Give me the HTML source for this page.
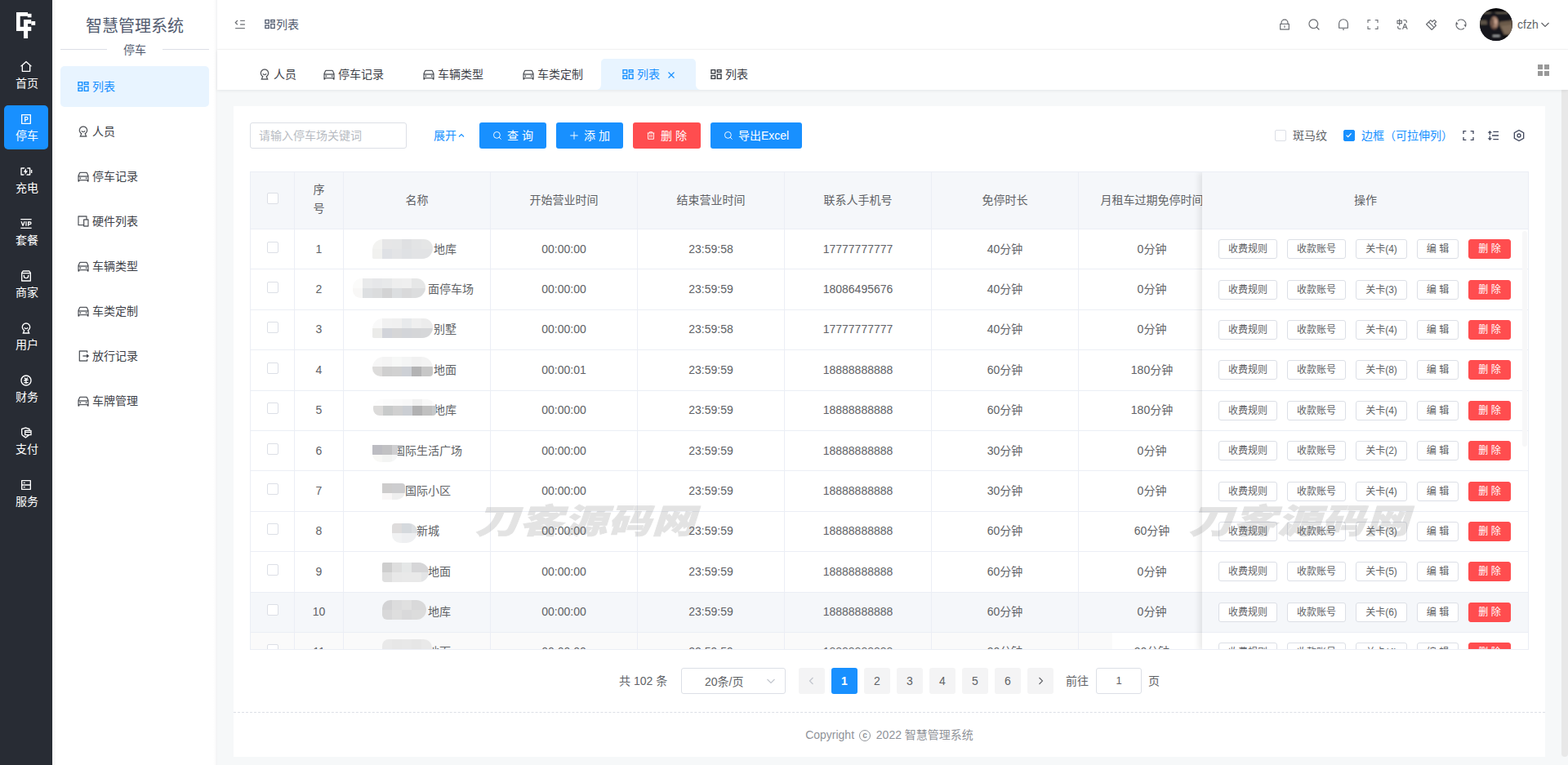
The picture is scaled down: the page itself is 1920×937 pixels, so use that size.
<!DOCTYPE html>
<html lang="zh-CN">
<head>
<meta charset="utf-8">
<title>智慧管理系统</title>
<style>
*{box-sizing:border-box;margin:0;padding:0}
html,body{width:1920px;height:937px;overflow:hidden;background:#f6f8f9;font-family:"Liberation Sans","Noto Sans CJK SC",sans-serif;font-size:14px;color:#606266}
svg{display:block}
i,b{font-style:normal;font-weight:normal}
.abs{position:absolute}
#col1{position:absolute;left:0;top:0;width:64px;height:937px;background:#282c34}
.c1{position:absolute;left:5px;width:54px;height:54px;border-radius:5px;color:#fff;text-align:center}
.c1.on{background:#1890ff}
.c1 svg{position:absolute;left:19px;top:9px;width:16px;height:16px}
.c1 span{position:absolute;left:1px;width:54px;top:27px;font-size:14px;line-height:20px;color:#fff}
#col2{position:absolute;left:64px;top:0;width:202px;height:937px;background:#fff}
#title{position:absolute;left:0;top:16px;width:202px;text-align:center;font-size:20px;line-height:32px;color:#515a6e}
#divl{position:absolute;left:10px;top:60px;width:182px;height:1px;background:#dcdfe6}
#divt{position:absolute;left:67px;top:50px;width:68px;background:#fff;text-align:center;font-size:14px;line-height:22px;color:#515a6e}
.m{position:absolute;left:10px;width:182px;height:50px;border-radius:5px;color:#3d4047;font-size:14px;line-height:50px;white-space:nowrap}
.m.on{background:#e8f4ff;color:#1890ff}
.m svg{position:absolute;left:20px;top:17px;width:16px;height:16px}
.m span{position:absolute;left:39px;top:0}
#hdr{position:absolute;left:266px;top:0;width:1654px;height:60px;background:#fff}
#hline{position:absolute;left:266px;top:60px;width:1654px;height:1px;background:#f5f5f6}
#tabs{position:absolute;left:266px;top:61px;width:1654px;height:49px;background:#fff;box-shadow:0 1px 4px rgba(0,21,41,.08)}
.hi{position:absolute;top:22px;width:16px;height:16px;color:#5a5d63;stroke:#fff;stroke-width:.45}
.tab{position:absolute;top:18px;height:24px;line-height:24px;font-size:14px;color:#3d4047;white-space:nowrap}
.tab svg{position:absolute;left:0;top:4px;width:16px;height:16px}
.tab span{position:absolute;left:19px;top:0}
#card{position:absolute;left:286px;top:130px;width:1606px;height:797px;background:#fff}
.btn{position:absolute;top:150px;height:32px;border-radius:3px;color:#fff;font-size:14px;line-height:32px;white-space:nowrap}
.btn svg{position:absolute;top:10px;width:12px;height:12px}
.blue{background:#1890ff}
.red{background:#ff4d4f}
.cb{display:block;width:14px;height:14px;border:1px solid #dcdfe6;border-radius:2px;background:#fff}
.cb.on{background:#1890ff;border-color:#1890ff}
#tbl{position:absolute;left:306px;top:210px;width:1566px;height:586px;border:1px solid #ebeef5;overflow:hidden;background:#fff}
#tbl .tr{position:absolute;left:0;width:1566px;border-bottom:1px solid #ebeef5;background:#fff}
#tbl .tr.th{background:#f5f7fa;color:#606266}
#tbl .tr.hov{background:#f5f7fa}
#tbl .tr.last{background:linear-gradient(90deg,#fafafa 1055px,#fff 1055px)}
#tbl .td{position:absolute;top:0;height:100%;border-right:1px solid #ebeef5;text-align:center;line-height:49px;font-size:14px;color:#606266;white-space:nowrap;overflow:hidden}
#tbl .tr:not(.th) .td{line-height:23px;padding-top:12.550px}
#tbl .tr:not(.th) .td span.abs{top:12.550px}
.blur{position:absolute;display:block;filter:blur(.4px)}
#fix{position:absolute;left:1165px;top:0;width:400px;height:586px;background:#fff;box-shadow:-3px 0 8px rgba(0,0,0,.1)}
#fix .fh{position:absolute;left:0;top:0;width:400px;background:#f5f7fa;text-align:center;font-size:14px;color:#606266;border-bottom:1px solid #ebeef5}
#fix .fr{position:absolute;left:0;width:400px;border-bottom:1px solid #ebeef5;background:#fff}
#fix .fr.hov{background:#f5f7fa}
.ob{position:absolute;top:12.300px;height:24px;border:1px solid #dcdfe6;border-radius:3px;background:#fff;font-size:12px;line-height:22px;text-align:center;color:#606266;white-space:nowrap}
.ob.del{background:#ff4d4f;border-color:#ff4d4f;color:#fff}
.wm{position:absolute;top:606px;font-size:53px;line-height:66px;font-weight:900;font-style:italic;color:#777;-webkit-text-stroke:1px #777;opacity:.2;white-space:nowrap;letter-spacing:1px;transform:scaleY(.78)}
.pg{position:absolute;top:818px;width:32px;height:32px;border-radius:3px;background:#f4f4f5;color:#606266;font-size:14px;line-height:32px;text-align:center}
.pg.on{background:#1890ff;color:#fff;font-weight:bold}
.pg svg{position:absolute;left:10px;top:10px;width:12px;height:12px}
#edge{position:absolute;left:261px;top:0;width:5px;height:937px;background:linear-gradient(90deg,rgba(0,21,41,0),rgba(0,21,41,.015) 50%,rgba(0,21,41,.055))}
#tbl .tr.last .td{padding-top:11.550px}
#tbl .tr.last .td span.abs{top:11.550px}
#tbl .tr.last .cb{margin-top:-1px}
.m svg path,.tab svg path{stroke:#fff;stroke-width:.35}
.m.on svg path{stroke:#e8f4ff}
#col2:before{content:"";position:absolute;left:0;top:0;width:5px;height:937px;background:linear-gradient(90deg,rgba(0,0,0,.05),rgba(0,0,0,0))}
</style>
</head>
<body>
<div id="card"></div>
<div class="abs" style="left:306px;top:150px;width:192px;height:32px;border:1px solid #dcdfe6;border-radius:3px;background:#fff;padding-left:10px;line-height:30px;font-size:14px;color:#b7bbc2">请输入停车场关键词</div>
<div class="abs" style="left:531px;top:150px;line-height:32px;font-size:14px;color:#1890ff">展开</div>
<svg class="abs" style="left:560px;top:161px;width:10px;height:10px" viewBox="0 0 10 10" fill="none" stroke="#1890ff" stroke-width="1.1"><path d="M2 6.500L5 3.500L8 6.500"/></svg>
<div class="btn blue" style="left:587px;width:82px"><svg viewBox="0 0 14 14" fill="none" stroke="currentColor" stroke-width="1.1" style="left:16px"><circle cx="6.3" cy="6.3" r="4.6"/><path d="M9.700 9.700L12 12" stroke-linecap="round"/></svg><span class="abs" style="left:34px">查 询</span></div>
<div class="btn blue" style="left:681px;width:82px"><svg viewBox="0 0 14 14" fill="none" stroke="currentColor" stroke-width="1.1" style="left:16px"><path d="M7 1.500v11M1.500 7h11"/></svg><span class="abs" style="left:34px">添 加</span></div>
<div class="btn red" style="left:775px;width:83px"><svg viewBox="0 0 14 14" fill="none" stroke="currentColor" stroke-width="1.1" style="left:16px"><path d="M2 3.500h10M5 3.500v-1.500h4v1.500M3 3.500v8.500h8v-8.500M5.700 5.700v4M8.300 5.700v4"/></svg><span class="abs" style="left:34px">删 除</span></div>
<div class="btn blue" style="left:870px;width:112px"><svg viewBox="0 0 14 14" fill="none" stroke="currentColor" stroke-width="1.1" style="left:16px"><circle cx="6.3" cy="6.3" r="4.6"/><path d="M9.700 9.700L12 12" stroke-linecap="round"/></svg><span class="abs" style="left:34px">导出Excel</span></div>
<div class="abs cb" style="left:1561px;top:159px"></div><div class="abs" style="left:1583px;top:155px;line-height:22px;font-size:14px;color:#606266">斑马纹</div>
<div class="abs cb on" style="left:1645px;top:159px"><svg viewBox="0 0 14 14" fill="none" stroke="#fff" stroke-width="1.4" style="width:12px;height:12px;margin:0"><path d="M3 6.500L5.500 9L10 4"/></svg></div><div class="abs" style="left:1667px;top:155px;line-height:22px;font-size:14px;color:#1890ff;white-space:nowrap">边框（可拉伸列）</div>
<svg viewBox="0 0 24 24" fill="currentColor" style="position:absolute;left:1790px;top:158px;width:16px;height:16px;color:#434a5f"><path d="M20 3h2v6h-2V5h-4V3h4zM4 3h4v2H4v4H2V3h2zm16 16v-4h2v6h-6v-2h4zM4 19h4v2H2v-6h2v4z"/></svg>
<svg class="abs" style="left:1821px;top:158px;width:16px;height:16px;color:#434a5f" viewBox="0 0 24 24" fill="currentColor"><path d="M11 4h10v2H11V4zM6 7v4H4V7H1l4-4 4 4H6zm0 10h3l-4 4-4-4h3v-4h2v4zm5 1h10v2H11v-2zm-2-7h12v2H9v-2z"/></svg>
<svg class="abs" style="left:1852px;top:158px;width:16px;height:16px;color:#434a5f" viewBox="0 0 24 24" fill="currentColor"><path d="M12 1l9.500 5.500v11L12 23l-9.500-5.500v-11L12 1zm0 2.311L4.500 7.653v8.694l7.500 4.342 7.500-4.342V7.653L12 3.311zM12 16a4 4 0 1 1 0-8 4 4 0 0 1 0 8zm0-2a2 2 0 1 0 0-4 2 2 0 0 0 0 4z"/></svg>
<div id="tbl">
<div class="tr th" style="top:0;height:70px">
<div class="td" style="left:0px;width:54px"><i class="cb" style="position:absolute;left:20px;top:25px"></i></div>
<div class="td" style="left:54px;width:60px;line-height:23px;padding-top:10px">序<br>号</div>
<div class="td" style="left:114px;width:180px;line-height:68px">名称</div>
<div class="td" style="left:294px;width:180px;line-height:68px">开始营业时间</div>
<div class="td" style="left:474px;width:180px;line-height:68px">结束营业时间</div>
<div class="td" style="left:654px;width:180px;line-height:68px">联系人手机号</div>
<div class="td" style="left:834px;width:180px;line-height:68px">免停时长</div>
<div class="td" style="left:1014px;width:180px;line-height:68px">月租车过期免停时间</div>
</div>
<div class="tr" style="top:70.0px;height:49.4px">
<div class="td" style="left:0;width:54px"><i class="cb" style="position:absolute;left:20px;top:14.550px"></i></div>
<div class="td" style="left:54px;width:60px">1</div>
<div class="td" style="left:114px;width:180px"><span class="abs" style="left:110px;white-space:nowrap">地库</span><b class="blur" style="left:35px;top:12px;width:74px;height:24px;border-radius:14px 12px 14px 2px;background:linear-gradient(90deg,#f3f3f1 0px 12px,#e6e6e7 12px 24px,#e5e6e7 24px 36px,#dfe0e2 36px 48px,#e3e4e5 48px 60px,#e5e6e6 60px 72px,#e5e6e6 72px 74px),linear-gradient(90deg,#f1f1ef 0px 12px,#dfe1e5 12px 24px,#e3e4e6 24px 36px,#dfe1e4 36px 48px,#e2e3e5 48px 60px,#e2e3e5 60px 72px,#e2e3e5 72px 74px);background-position:0 0px,0 12px;background-size:100% 12px,100% 12px;background-repeat:no-repeat"></b></div>
<div class="td" style="left:294px;width:180px">00:00:00</div>
<div class="td" style="left:474px;width:180px">23:59:58</div>
<div class="td" style="left:654px;width:180px">17777777777</div>
<div class="td" style="left:834px;width:180px">40分钟</div>
<div class="td" style="left:1014px;width:180px">0分钟</div>
</div>
<div class="tr" style="top:119.4px;height:49.4px">
<div class="td" style="left:0;width:54px"><i class="cb" style="position:absolute;left:20px;top:14.550px"></i></div>
<div class="td" style="left:54px;width:60px">2</div>
<div class="td" style="left:114px;width:180px"><span class="abs" style="left:103px;white-space:nowrap">面停车场</span><b class="blur" style="left:11px;top:11px;width:89px;height:24px;border-radius:12px 12px 14px 10px;background:linear-gradient(90deg,#fbfbfa 0px 12px,#e9eaeb 12px 24px,#e6e7e9 24px 36px,#e8e9ea 36px 48px,#eeeeee 48px 60px,#efefef 60px 72px,#e6e7e7 72px 84px,#e6e7e7 84px 89px),linear-gradient(90deg,#f8f7f6 0px 12px,#dddfe1 12px 24px,#dbdcdd 24px 36px,#d3d3d4 36px 48px,#dcdee0 48px 60px,#d9d9da 60px 72px,#dcddde 72px 84px,#dcddde 84px 89px);background-position:0 0px,0 12px;background-size:100% 12px,100% 12px;background-repeat:no-repeat"></b></div>
<div class="td" style="left:294px;width:180px">00:00:00</div>
<div class="td" style="left:474px;width:180px">23:59:59</div>
<div class="td" style="left:654px;width:180px">18086495676</div>
<div class="td" style="left:834px;width:180px">40分钟</div>
<div class="td" style="left:1014px;width:180px">0分钟</div>
</div>
<div class="tr" style="top:168.8px;height:49.4px">
<div class="td" style="left:0;width:54px"><i class="cb" style="position:absolute;left:20px;top:14.550px"></i></div>
<div class="td" style="left:54px;width:60px">3</div>
<div class="td" style="left:114px;width:180px"><span class="abs" style="left:110px;white-space:nowrap">别墅</span><b class="blur" style="left:35px;top:10px;width:74px;height:24px;border-radius:14px 12px 14px 2px;background:linear-gradient(90deg,#f9f9f9 0px 12px,#f1f1f1 12px 24px,#f0f0f0 24px 36px,#e8eaec 36px 48px,#efefef 48px 60px,#ececec 60px 72px,#ececec 72px 74px),linear-gradient(90deg,#ebebe9 0px 12px,#d2d4da 12px 24px,#d6d6d7 24px 36px,#d3d5d9 36px 48px,#d5d6d8 48px 60px,#d6d7d9 60px 72px,#d6d7d9 72px 74px);background-position:0 0px,0 12px;background-size:100% 12px,100% 12px;background-repeat:no-repeat"></b></div>
<div class="td" style="left:294px;width:180px">00:00:00</div>
<div class="td" style="left:474px;width:180px">23:59:58</div>
<div class="td" style="left:654px;width:180px">17777777777</div>
<div class="td" style="left:834px;width:180px">40分钟</div>
<div class="td" style="left:1014px;width:180px">0分钟</div>
</div>
<div class="tr" style="top:218.2px;height:49.4px">
<div class="td" style="left:0;width:54px"><i class="cb" style="position:absolute;left:20px;top:14.550px"></i></div>
<div class="td" style="left:54px;width:60px">4</div>
<div class="td" style="left:114px;width:180px"><span class="abs" style="left:110px;white-space:nowrap">地面</span><b class="blur" style="left:35px;top:8px;width:74px;height:24px;border-radius:14px 14px 4px 10px;background:linear-gradient(90deg,#f6f6f6 0px 12px,#f4f4f4 12px 24px,#f7f8f7 24px 36px,#f4f5f5 36px 48px,#f1f1f1 48px 60px,#f3f3f3 60px 72px,#f3f3f3 72px 74px),linear-gradient(90deg,#dddcdb 0px 12px,#cfcfcf 12px 24px,#d1d1d1 24px 36px,#cdd0d5 36px 48px,#b3b3b4 48px 60px,#c7c7c7 60px 72px,#c7c7c7 72px 74px);background-position:0 0px,0 12px;background-size:100% 12px,100% 12px;background-repeat:no-repeat"></b></div>
<div class="td" style="left:294px;width:180px">00:00:01</div>
<div class="td" style="left:474px;width:180px">23:59:59</div>
<div class="td" style="left:654px;width:180px">18888888888</div>
<div class="td" style="left:834px;width:180px">60分钟</div>
<div class="td" style="left:1014px;width:180px">180分钟</div>
</div>
<div class="tr" style="top:267.6px;height:49.4px">
<div class="td" style="left:0;width:54px"><i class="cb" style="position:absolute;left:20px;top:14.550px"></i></div>
<div class="td" style="left:54px;width:60px">5</div>
<div class="td" style="left:114px;width:180px"><span class="abs" style="left:110px;white-space:nowrap">地库</span><b class="blur" style="left:36px;top:10px;width:77px;height:20px;border-radius:10px 12px 4px 8px;background:linear-gradient(90deg,#fdfdfd 0px 12px,#fbfbfb 12px 24px,#fafafa 24px 36px,#f8f8f8 36px 48px,#f1f1f1 48px 60px,#f8f8f8 60px 72px,#fbfbfb 72px 77px),linear-gradient(90deg,#dcdbda 0px 12px,#c8caca 12px 24px,#d0d0d0 24px 36px,#cbced3 36px 48px,#b1b1b2 48px 60px,#c0c0c0 60px 72px,#c6c8c9 72px 77px);background-position:0 0px,0 8px;background-size:100% 8px,100% 12px;background-repeat:no-repeat"></b></div>
<div class="td" style="left:294px;width:180px">00:00:00</div>
<div class="td" style="left:474px;width:180px">23:59:59</div>
<div class="td" style="left:654px;width:180px">18888888888</div>
<div class="td" style="left:834px;width:180px">60分钟</div>
<div class="td" style="left:1014px;width:180px">180分钟</div>
</div>
<div class="tr" style="top:317.0px;height:49.4px">
<div class="td" style="left:0;width:54px"><i class="cb" style="position:absolute;left:20px;top:14.550px"></i></div>
<div class="td" style="left:54px;width:60px">6</div>
<div class="td" style="left:114px;width:180px"><span class="abs" style="left:61px;white-space:nowrap">国际生活广场</span><b class="blur" style="left:35px;top:17px;width:31px;height:21px;border-radius:0 0 10px 10px;background:linear-gradient(90deg,#bcbcc2 0px 12px,#c1c1c3 12px 24px,#cfcfd1 24px 31px),linear-gradient(90deg,#f8f8f6 0px 12px,#f3f4f3 12px 24px,#f6f7f7 24px 31px);background-position:0 0px,0 12px;background-size:100% 12px,100% 9px;background-repeat:no-repeat"></b></div>
<div class="td" style="left:294px;width:180px">00:00:00</div>
<div class="td" style="left:474px;width:180px">23:59:59</div>
<div class="td" style="left:654px;width:180px">18888888888</div>
<div class="td" style="left:834px;width:180px">30分钟</div>
<div class="td" style="left:1014px;width:180px">0分钟</div>
</div>
<div class="tr" style="top:366.4px;height:49.4px">
<div class="td" style="left:0;width:54px"><i class="cb" style="position:absolute;left:20px;top:14.550px"></i></div>
<div class="td" style="left:54px;width:60px">7</div>
<div class="td" style="left:114px;width:180px"><span class="abs" style="left:75px;white-space:nowrap">国际小区</span><b class="blur" style="left:47px;top:15px;width:28px;height:20px;border-radius:0 4px 10px 0;background:linear-gradient(90deg,#cdcccc 0px 12px,#cdcdcf 12px 24px,#cdcdcf 24px 28px),linear-gradient(90deg,#f9f7f7 0px 12px,#efefef 12px 24px,#efefef 24px 28px);background-position:0 0px,0 12px;background-size:100% 12px,100% 8px;background-repeat:no-repeat"></b></div>
<div class="td" style="left:294px;width:180px">00:00:00</div>
<div class="td" style="left:474px;width:180px">23:59:59</div>
<div class="td" style="left:654px;width:180px">18888888888</div>
<div class="td" style="left:834px;width:180px">30分钟</div>
<div class="td" style="left:1014px;width:180px">0分钟</div>
</div>
<div class="tr" style="top:415.8px;height:49.4px">
<div class="td" style="left:0;width:54px"><i class="cb" style="position:absolute;left:20px;top:14.550px"></i></div>
<div class="td" style="left:54px;width:60px">8</div>
<div class="td" style="left:114px;width:180px"><span class="abs" style="left:89px;white-space:nowrap">新城</span><b class="blur" style="left:59px;top:14px;width:31px;height:24px;border-radius:4px 10px 14px 10px;background:linear-gradient(90deg,#dedcdc 0px 12px,#d5d9dd 12px 24px,#dcdfe2 24px 31px),linear-gradient(90deg,#f1f2f3 0px 12px,#eeeff1 12px 24px,#eeeff1 24px 31px);background-position:0 0px,0 12px;background-size:100% 12px,100% 12px;background-repeat:no-repeat"></b></div>
<div class="td" style="left:294px;width:180px">00:00:00</div>
<div class="td" style="left:474px;width:180px">23:59:59</div>
<div class="td" style="left:654px;width:180px">18888888888</div>
<div class="td" style="left:834px;width:180px">60分钟</div>
<div class="td" style="left:1014px;width:180px">60分钟</div>
</div>
<div class="tr" style="top:465.2px;height:49.4px">
<div class="td" style="left:0;width:54px"><i class="cb" style="position:absolute;left:20px;top:14.550px"></i></div>
<div class="td" style="left:54px;width:60px">9</div>
<div class="td" style="left:114px;width:180px"><span class="abs" style="left:103px;white-space:nowrap">地面</span><b class="blur" style="left:47px;top:13px;width:57px;height:24px;border-radius:2px 14px 14px 4px;background:linear-gradient(90deg,#cecece 0px 12px,#dedede 12px 24px,#e5e7e7 24px 36px,#d6d6d8 36px 48px,#d6d6d8 48px 57px),linear-gradient(90deg,#dfdfdf 0px 12px,#e8e8e8 12px 24px,#e9e9e9 24px 36px,#e9e9e9 36px 48px,#e3e4e6 48px 57px);background-position:0 0px,0 12px;background-size:100% 12px,100% 12px;background-repeat:no-repeat"></b></div>
<div class="td" style="left:294px;width:180px">00:00:00</div>
<div class="td" style="left:474px;width:180px">23:59:59</div>
<div class="td" style="left:654px;width:180px">18888888888</div>
<div class="td" style="left:834px;width:180px">60分钟</div>
<div class="td" style="left:1014px;width:180px">0分钟</div>
</div>
<div class="tr hov" style="top:514.6px;height:49.4px">
<div class="td" style="left:0;width:54px"><i class="cb" style="position:absolute;left:20px;top:14.550px"></i></div>
<div class="td" style="left:54px;width:60px">10</div>
<div class="td" style="left:114px;width:180px"><span class="abs" style="left:103px;white-space:nowrap">地库</span><b class="blur" style="left:47px;top:9px;width:54px;height:24px;border-radius:10px 12px 12px 6px;background:linear-gradient(90deg,#d3d3d5 0px 12px,#dcdcdd 12px 24px,#e0e0e0 24px 36px,#d9d9da 36px 48px,#d9d9da 48px 54px),linear-gradient(90deg,#d8d8d9 0px 12px,#dedede 12px 24px,#d9d9da 24px 36px,#dcdcdc 36px 48px,#dcdcdc 48px 54px);background-position:0 0px,0 12px;background-size:100% 12px,100% 12px;background-repeat:no-repeat"></b></div>
<div class="td" style="left:294px;width:180px">00:00:00</div>
<div class="td" style="left:474px;width:180px">23:59:59</div>
<div class="td" style="left:654px;width:180px">18888888888</div>
<div class="td" style="left:834px;width:180px">60分钟</div>
<div class="td" style="left:1014px;width:180px">0分钟</div>
</div>
<div class="tr last" style="top:564.0px;height:49.4px">
<div class="td" style="left:0;width:54px"><i class="cb" style="position:absolute;left:20px;top:14.550px"></i></div>
<div class="td" style="left:54px;width:60px">11</div>
<div class="td" style="left:114px;width:180px"><span class="abs" style="left:103px;white-space:nowrap">地面</span><b class="blur" style="left:47px;top:8px;width:61px;height:12px;border-radius:8px 10px 0 0;background:linear-gradient(90deg,#e9e9e9 0px 12px,#e7e7e7 12px 24px,#e8e8e8 24px 36px,#e6e6e6 36px 48px,#e9e9e9 48px 60px,#e9e9e9 60px 61px);background-position:0 0px;background-size:100% 12px;background-repeat:no-repeat"></b></div>
<div class="td" style="left:294px;width:180px">00:00:00</div>
<div class="td" style="left:474px;width:180px">23:59:59</div>
<div class="td" style="left:654px;width:180px">18888888888</div>
<div class="td" style="left:834px;width:180px">30分钟</div>
<div class="td" style="left:1014px;width:180px">30分钟</div>
</div>
<div id="fix"><div class="fh" style="height:70px;line-height:68px">操作</div>
<div class="fr" style="top:70.0px;height:49.4px"><span class="ob" style="left:20px;width:72px">收费规则</span><span class="ob" style="left:104px;width:72px">收款账号</span><span class="ob" style="left:188px;width:63px">关卡(4)</span><span class="ob" style="left:263px;width:51px">编 辑</span><span class="ob del" style="left:326px;width:52px">删 除</span></div>
<div class="fr" style="top:119.4px;height:49.4px"><span class="ob" style="left:20px;width:72px">收费规则</span><span class="ob" style="left:104px;width:72px">收款账号</span><span class="ob" style="left:188px;width:63px">关卡(3)</span><span class="ob" style="left:263px;width:51px">编 辑</span><span class="ob del" style="left:326px;width:52px">删 除</span></div>
<div class="fr" style="top:168.8px;height:49.4px"><span class="ob" style="left:20px;width:72px">收费规则</span><span class="ob" style="left:104px;width:72px">收款账号</span><span class="ob" style="left:188px;width:63px">关卡(4)</span><span class="ob" style="left:263px;width:51px">编 辑</span><span class="ob del" style="left:326px;width:52px">删 除</span></div>
<div class="fr" style="top:218.2px;height:49.4px"><span class="ob" style="left:20px;width:72px">收费规则</span><span class="ob" style="left:104px;width:72px">收款账号</span><span class="ob" style="left:188px;width:63px">关卡(8)</span><span class="ob" style="left:263px;width:51px">编 辑</span><span class="ob del" style="left:326px;width:52px">删 除</span></div>
<div class="fr" style="top:267.6px;height:49.4px"><span class="ob" style="left:20px;width:72px">收费规则</span><span class="ob" style="left:104px;width:72px">收款账号</span><span class="ob" style="left:188px;width:63px">关卡(4)</span><span class="ob" style="left:263px;width:51px">编 辑</span><span class="ob del" style="left:326px;width:52px">删 除</span></div>
<div class="fr" style="top:317.0px;height:49.4px"><span class="ob" style="left:20px;width:72px">收费规则</span><span class="ob" style="left:104px;width:72px">收款账号</span><span class="ob" style="left:188px;width:63px">关卡(2)</span><span class="ob" style="left:263px;width:51px">编 辑</span><span class="ob del" style="left:326px;width:52px">删 除</span></div>
<div class="fr" style="top:366.4px;height:49.4px"><span class="ob" style="left:20px;width:72px">收费规则</span><span class="ob" style="left:104px;width:72px">收款账号</span><span class="ob" style="left:188px;width:63px">关卡(4)</span><span class="ob" style="left:263px;width:51px">编 辑</span><span class="ob del" style="left:326px;width:52px">删 除</span></div>
<div class="fr" style="top:415.8px;height:49.4px"><span class="ob" style="left:20px;width:72px">收费规则</span><span class="ob" style="left:104px;width:72px">收款账号</span><span class="ob" style="left:188px;width:63px">关卡(3)</span><span class="ob" style="left:263px;width:51px">编 辑</span><span class="ob del" style="left:326px;width:52px">删 除</span></div>
<div class="fr" style="top:465.2px;height:49.4px"><span class="ob" style="left:20px;width:72px">收费规则</span><span class="ob" style="left:104px;width:72px">收款账号</span><span class="ob" style="left:188px;width:63px">关卡(5)</span><span class="ob" style="left:263px;width:51px">编 辑</span><span class="ob del" style="left:326px;width:52px">删 除</span></div>
<div class="fr hov" style="top:514.6px;height:49.4px"><span class="ob" style="left:20px;width:72px">收费规则</span><span class="ob" style="left:104px;width:72px">收款账号</span><span class="ob" style="left:188px;width:63px">关卡(6)</span><span class="ob" style="left:263px;width:51px">编 辑</span><span class="ob del" style="left:326px;width:52px">删 除</span></div>
<div class="fr last" style="top:564.0px;height:49.4px"><span class="ob" style="left:20px;width:72px">收费规则</span><span class="ob" style="left:104px;width:72px">收款账号</span><span class="ob" style="left:188px;width:63px">关卡(4)</span><span class="ob" style="left:263px;width:51px">编 辑</span><span class="ob del" style="left:326px;width:52px">删 除</span></div>
<div class="abs" style="left:392px;top:72px;width:6px;height:264px;background:#f7f7f8;border-radius:3px"></div>
</div>
</div>
<div class="wm" style="left:582px">刀客源码网</div>
<div class="wm" style="left:1456px">刀客源码网</div>
<div class="abs" style="left:758px;top:818px;line-height:32px;font-size:14px;color:#606266;white-space:nowrap">共 102 条</div>
<div class="abs" style="left:834px;top:818px;width:128px;height:32px;border:1px solid #dcdfe6;border-radius:3px;line-height:30px;font-size:14px;color:#606266"><span class="abs" style="left:28px;top:1px">20条/页</span><svg class="abs" style="left:103px;top:9px;width:12px;height:12px" viewBox="0 0 12 12" fill="none" stroke="#c0c4cc" stroke-width="1.1"><path d="M1.500 4L6 8.500L10.500 4"/></svg></div>
<div class="pg" style="left:978px"><svg viewBox="0 0 12 12" fill="none" stroke="#c0c4cc" stroke-width="1.2"><path d="M7.500 2L3.500 6L7.500 10"/></svg></div>
<div class="pg on" style="left:1018px">1</div>
<div class="pg" style="left:1058px">2</div>
<div class="pg" style="left:1098px">3</div>
<div class="pg" style="left:1138px">4</div>
<div class="pg" style="left:1178px">5</div>
<div class="pg" style="left:1218px">6</div>
<div class="pg" style="left:1258px"><svg viewBox="0 0 12 12" fill="none" stroke="#606266" stroke-width="1.1"><path d="M4.500 2L8.500 6L4.500 10"/></svg></div>
<div class="abs" style="left:1305px;top:818px;line-height:32px;font-size:14px;color:#606266">前往</div>
<div class="abs" style="left:1342px;top:818px;width:56px;height:32px;border:1px solid #dcdfe6;border-radius:3px;line-height:30px;font-size:13px;color:#606266;text-align:center">1</div>
<div class="abs" style="left:1406px;top:818px;line-height:32px;font-size:14px;color:#606266">页</div>
<div class="abs" style="left:286px;top:872px;width:1606px;height:0;border-top:1px dashed #dcdfe6"></div>
<div class="abs" style="left:286px;top:889px;width:1606px;text-align:center;line-height:22px;font-size:14px;color:#909399;white-space:nowrap">Copyright <span style="display:inline-block;width:14px;height:14px;border:1px solid #909399;border-radius:50%;font-size:10px;font-weight:bold;line-height:11px;text-align:center;vertical-align:1px;margin:0 3px 0 2px">c</span> 2022 智慧管理系统</div>
<div class="abs" style="left:1912px;top:110px;width:8px;height:817px;background:#e8e8e8;border-radius:0 0 4px 4px"></div>
<div id="col1">
<svg class="abs" style="left:19px;top:13px;width:26px;height:36px" viewBox="19 13 26 36" fill="#fff"><rect x="20" y="15" width="4.7" height="23"/><rect x="20" y="15" width="14" height="4.8"/><rect x="33.8" y="16.8" width="4.7" height="4.5"/><rect x="29" y="24" width="9.2" height="5"/><rect x="38.3" y="26" width="4.9" height="4.8"/><rect x="29" y="24" width="5.1" height="23"/><rect x="20" y="32.8" width="18.3" height="5.1"/></svg>
<div class="c1" style="top:65px"><svg viewBox="0 0 24 24" fill="currentColor"><path d="M19 21H5a1 1 0 0 1-1-1v-9H1l10.327-9.388a1 1 0 0 1 1.346 0L23 11h-3v9a1 1 0 0 1-1 1zM6 19h12V9.157l-6-5.454-6 5.454V19z"/></svg><span>首页</span></div>
<div class="c1 on" style="top:129px"><svg viewBox="0 0 24 24" fill="currentColor"><path d="M4 3h16a1 1 0 0 1 1 1v16a1 1 0 0 1-1 1H4a1 1 0 0 1-1-1V4a1 1 0 0 1 1-1zm1 2v14h14V5H5zm4 2h3.5a3.5 3.5 0 0 1 0 7H11v3H9V7zm2 2v3h1.5a1.5 1.5 0 0 0 0-3H11z"/></svg><span>停车</span></div>
<div class="c1" style="top:193px"><svg viewBox="0 0 24 24" fill="currentColor"><path d="M8 19H3a1 1 0 0 1-1-1V6a1 1 0 0 1 1-1h6.625L8.458 7H4v10h4v2zm4.375 0l1.167-2H18V7h-4V5h5a1 1 0 0 1 1 1v12a1 1 0 0 1-1 1h-6.625zM21 9h2v6h-2V9zm-9 2h3l-5 7v-5H7l5-7v5z"/></svg><span>充电</span></div>
<div class="c1" style="top:257px"><svg viewBox="0 0 24 24" fill="currentColor"><path d="M2 19h20v2H2v-2zm9-11h2v8h-2V8zM7.965 8h2.125l-2.986 7.964h-2L2.118 8h2.125l1.861 5.113L7.965 8zM17 14v2h-2V8h4a3 3 0 0 1 0 6h-2zm0-4v2h2a1 1 0 0 0 0-2h-2zM2 3h20v2H2V3z"/></svg><span>套餐</span></div>
<div class="c1" style="top:321px"><svg viewBox="0 0 24 24" fill="currentColor"><path d="M6.5 2h11a1 1 0 0 1 .8.4L21 6v15a1 1 0 0 1-1 1H4a1 1 0 0 1-1-1V6l2.7-3.6a1 1 0 0 1 .8-.4zM19 8H5v12h14V8zm-.5-2L17 4H7L5.5 6h13zM9 10v2a3 3 0 0 0 6 0v-2h2v2a5 5 0 0 1-10 0v-2h2z"/></svg><span>商家</span></div>
<div class="c1" style="top:385px"><svg viewBox="0 0 24 24" fill="currentColor"><path d="M7.39 16.539a8 8 0 1 1 9.221 0l2.083 4.76a.5.5 0 0 1-.459.701H5.765a.5.5 0 0 1-.459-.7l2.083-4.761zm6.735-.693l1.332-.941a6 6 0 1 0-6.913 0l1.331.941L8.058 20h7.884l-1.817-4.154zM8.119 10.97l1.94-.485a2 2 0 0 0 3.882 0l1.94.485a4.002 4.002 0 0 1-7.762 0z"/></svg><span>用户</span></div>
<div class="c1" style="top:449px"><svg viewBox="0 0 24 24" fill="currentColor"><path d="M12 22C6.477 22 2 17.523 2 12S6.477 2 12 2s10 4.477 10 10-4.477 10-10 10zm0-2a8 8 0 1 0 0-16 8 8 0 0 0 0 16zm1-7v2h3v2h-3v1h-2v-1H8v-2h3v-2H8v-2h2.586L8.464 7.879 9.88 6.464 12 8.586l2.121-2.122 1.415 1.415L13.414 10H16v2h-3z"/></svg><span>财务</span></div>
<div class="c1" style="top:513px"><svg viewBox="0 0 24 24" fill="currentColor"><path d="M11 2l7.298 2.28a1 1 0 0 1 .702.955V7h2a1 1 0 0 1 1 1v8a1 1 0 0 1-1 1l-3.22.001c-.387.51-.857.96-1.4 1.33L11 22l-5.38-3.668A6 6 0 0 1 3 13.374V5.235a1 1 0 0 1 .702-.954L11 2zm0 2.094L5 5.97v7.404a4 4 0 0 0 1.558 3.169l.189.136L11 19.58 14.782 17H10a1 1 0 0 1-1-1V8a1 1 0 0 1 1-1h7V5.970l-6-1.876zM11 12v3h9v-3h-9zm0-2h9V9h-9v1z"/></svg><span>支付</span></div>
<div class="c1" style="top:577px"><svg viewBox="0 0 24 24" fill="currentColor"><path d="M5 11h14V5H5v6zm16-7v16a1 1 0 0 1-1 1H4a1 1 0 0 1-1-1V4a1 1 0 0 1 1-1h16a1 1 0 0 1 1 1zm-2 9H5v6h14v-6zM7 15h3v2H7v-2zm0-8h3v2H7V7z"/></svg><span>服务</span></div>
</div>
<div id="col2">
<div id="title">智慧管理系统</div><div id="divl"></div><div id="divt">停车</div>
<div class="m on" style="top:81px"><svg viewBox="0 0 24 24" fill="none" stroke="currentColor" stroke-width="2.100"><rect x="3" y="4" width="7" height="6.500"/><rect x="3" y="14.500" width="7" height="5.500"/><rect x="14" y="4" width="7" height="4"/><rect x="14" y="12" width="7" height="8"/></svg><span>列表</span></div>
<div class="m" style="top:136px"><svg viewBox="0 0 24 24" fill="currentColor"><path d="M7.39 16.539a8 8 0 1 1 9.221 0l2.083 4.76a.5.5 0 0 1-.459.701H5.765a.5.5 0 0 1-.459-.7l2.083-4.761zm6.735-.693l1.332-.941a6 6 0 1 0-6.913 0l1.331.941L8.058 20h7.884l-1.817-4.154zM8.119 10.97l1.94-.485a2 2 0 0 0 3.882 0l1.94.485a4.002 4.002 0 0 1-7.762 0z"/></svg><span>人员</span></div>
<div class="m" style="top:191px"><svg viewBox="0 0 24 24" fill="currentColor"><path d="M19 20H5v1a1 1 0 0 1-1 1H3a1 1 0 0 1-1-1V11l2.480-5.788A2 2 0 0 1 6.320 4H17.680a2 2 0 0 1 1.838 1.212L22 11v10a1 1 0 0 1-1 1h-1a1 1 0 0 1-1-1v-1zm1-7H4v5h16v-5zM4.176 11h15.648l-2.143-5H6.320l-2.143 5zM6.500 17a1.500 1.500 0 1 1 0-3 1.500 1.500 0 0 1 0 3zm11 0a1.500 1.500 0 1 1 0-3 1.500 1.500 0 0 1 0 3z"/></svg><span>停车记录</span></div>
<div class="m" style="top:246px"><svg viewBox="0 0 24 24" fill="currentColor"><path d="M19 8h2a1 1 0 0 1 1 1v12a1 1 0 0 1-1 1h-8a1 1 0 0 1-1-1v-1H3a1 1 0 0 1-1-1V3a1 1 0 0 1 1-1h15a1 1 0 0 1 1 1v5zm-2 0V4H4v14h8V9a1 1 0 0 1 1-1h4zm-3 2v10h6V10h-6z"/></svg><span>硬件列表</span></div>
<div class="m" style="top:301px"><svg viewBox="0 0 24 24" fill="currentColor"><path d="M19 20H5v1a1 1 0 0 1-1 1H3a1 1 0 0 1-1-1V11l2.480-5.788A2 2 0 0 1 6.320 4H17.680a2 2 0 0 1 1.838 1.212L22 11v10a1 1 0 0 1-1 1h-1a1 1 0 0 1-1-1v-1zm1-7H4v5h16v-5zM4.176 11h15.648l-2.143-5H6.320l-2.143 5zM6.500 17a1.500 1.500 0 1 1 0-3 1.500 1.500 0 0 1 0 3zm11 0a1.500 1.500 0 1 1 0-3 1.500 1.500 0 0 1 0 3z"/></svg><span>车辆类型</span></div>
<div class="m" style="top:356px"><svg viewBox="0 0 24 24" fill="currentColor"><path d="M19 20H5v1a1 1 0 0 1-1 1H3a1 1 0 0 1-1-1V11l2.480-5.788A2 2 0 0 1 6.320 4H17.680a2 2 0 0 1 1.838 1.212L22 11v10a1 1 0 0 1-1 1h-1a1 1 0 0 1-1-1v-1zm1-7H4v5h16v-5zM4.176 11h15.648l-2.143-5H6.320l-2.143 5zM6.500 17a1.500 1.500 0 1 1 0-3 1.500 1.500 0 0 1 0 3zm11 0a1.500 1.500 0 1 1 0-3 1.500 1.500 0 0 1 0 3z"/></svg><span>车类定制</span></div>
<div class="m" style="top:411px"><svg viewBox="0 0 24 24" fill="currentColor"><path d="M5 22a1 1 0 0 1-1-1V3a1 1 0 0 1 1-1h14a1 1 0 0 1 1 1v3h-2V4H6v16h12v-2h2v3a1 1 0 0 1-1 1H5zm13-6v-3h-7v-2h7V8l5 4-5 4z"/></svg><span>放行记录</span></div>
<div class="m" style="top:466px"><svg viewBox="0 0 24 24" fill="currentColor"><path d="M19 20H5v1a1 1 0 0 1-1 1H3a1 1 0 0 1-1-1V11l2.480-5.788A2 2 0 0 1 6.320 4H17.680a2 2 0 0 1 1.838 1.212L22 11v10a1 1 0 0 1-1 1h-1a1 1 0 0 1-1-1v-1zm1-7H4v5h16v-5zM4.176 11h15.648l-2.143-5H6.320l-2.143 5zM6.500 17a1.500 1.500 0 1 1 0-3 1.500 1.500 0 0 1 0 3zm11 0a1.500 1.500 0 1 1 0-3 1.500 1.500 0 0 1 0 3z"/></svg><span>车牌管理</span></div>
</div>
<div id="edge"></div>
<div id="hdr">
<svg viewBox="0 0 24 24" fill="currentColor" class="hi" style="left:20px"><path d="M21 18v2H3v-2h18zM6.596 3.904L8.010 5.318 4.828 8.500l3.182 3.182-1.414 1.414L2 8.500l4.596-4.596zM21 11v2h-9v-2h9zm0-7v2h-9V4h9z"/></svg>
<div class="abs" style="left:57px;top:19px;height:22px;line-height:22px;font-size:14px;color:#515a6e;white-space:nowrap"><svg viewBox="0 0 24 24" fill="none" stroke="currentColor" stroke-width="2.100" style="position:absolute;left:0;top:3px;width:15px;height:15px"><rect x="3" y="4" width="7" height="6.500"/><rect x="3" y="14.500" width="7" height="5.500"/><rect x="14" y="4" width="7" height="4"/><rect x="14" y="12" width="7" height="8"/></svg><span style="position:absolute;left:15px;top:0">列表</span></div>
<svg viewBox="0 0 24 24" fill="currentColor" class="hi" style="left:1299px"><path d="M19 10h1a1 1 0 0 1 1 1v10a1 1 0 0 1-1 1H4a1 1 0 0 1-1-1V11a1 1 0 0 1 1-1h1V9a7 7 0 1 1 14 0v1zM5 12v8h14v-8H5zm6 2h2v4h-2v-4zm6-4V9A5 5 0 0 0 7 9v1h10z"/></svg>
<svg viewBox="0 0 24 24" fill="currentColor" class="hi" style="left:1335px"><path d="M18.031 16.617l4.283 4.282-1.415 1.415-4.282-4.283A8.960 8.960 0 0 1 11 20c-4.968 0-9-4.032-9-9s4.032-9 9-9 9 4.032 9 9a8.960 8.960 0 0 1-1.969 5.617zm-2.006-.742A6.977 6.977 0 0 0 18 11c0-3.868-3.133-7-7-7-3.868 0-7 3.132-7 7 0 3.867 3.132 7 7 7a6.977 6.977 0 0 0 4.875-1.975l.150-.150z"/></svg>
<svg viewBox="0 0 24 24" class="abs" style="left:1371px;top:22px;width:16px;height:16px;color:#5a5d63" fill="none" stroke="currentColor" stroke-width="1.600"><path d="M4 18.500V10.500a8 8 0 0 1 16 0V18.500Z" stroke-linejoin="round"/><path d="M9.800 20.300h4.400L12 22.800z" fill="currentColor" stroke="none"/></svg>
<svg viewBox="0 0 24 24" fill="currentColor" class="hi" style="left:1407px"><path d="M20 3h2v6h-2V5h-4V3h4zM4 3h4v2H4v4H2V3h2zm16 16v-4h2v6h-6v-2h4zM4 19h4v2H2v-6h2v4z"/></svg>
<svg viewBox="0 0 24 24" fill="currentColor" class="hi" style="left:1443px"><path d="M5 15v2a2 2 0 0 0 1.850 1.995L7 19h3v2H7a4 4 0 0 1-4-4v-2h2zm13-5l4.400 11h-2.155l-1.201-3h-4.090l-1.199 3h-2.154L16 10h2zm-1 2.885L15.753 16h2.492L17 12.885zM8 2v2h4v7H8v3H6v-3H2V4h4V2h2zm9 1a4 4 0 0 1 4 4v2h-2V7a2 2 0 0 0-2-2h-3V3h3zM6 6H4v3h2V6zm4 0H8v3h2V6z"/></svg>
<svg viewBox="0 0 24 24" fill="currentColor" class="hi" style="left:1479px"><path d="M16.536 15.950l2.120-2.122-3.181-3.182 3.535-3.535-2.120-2.121-3.536 3.535-3.182-3.182L8.050 7.464l8.486 8.486zm-1.415 1.414L6.636 8.880 3.808 11.707l8.485 8.485 2.828-2.828zM13.354 5.697l2.828-2.829a1 1 0 0 1 1.414 0l3.536 3.536a1 1 0 0 1 0 1.414l-2.829 2.828 2.475 2.475a1 1 0 0 1 0 1.415L13 22.314a1 1 0 0 1-1.414 0l-9.900-9.900a1 1 0 0 1 0-1.414l7.778-7.778a1 1 0 0 1 1.415 0l2.475 2.475z"/></svg>
<svg viewBox="0 0 24 24" fill="currentColor" class="hi" style="left:1515px"><path d="M5.463 4.433A9.961 9.961 0 0 1 12 2c5.523 0 10 4.477 10 10 0 2.136-.670 4.116-1.810 5.740L17 12h3A8 8 0 0 0 6.460 6.228l-.997-1.795zm13.074 15.134A9.961 9.961 0 0 1 12 22C6.477 22 2 17.523 2 12c0-2.136.670-4.116 1.810-5.740L7 12H4a8 8 0 0 0 13.540 5.772l.997 1.795z"/></svg>
<svg class="abs" id="ava" style="left:1546px;top:10px;width:40px;height:40px" viewBox="0 0 40 40"><defs><clipPath id="avc"><circle cx="20" cy="20" r="20"/></clipPath><filter id="avb" x="-10%" y="-10%" width="120%" height="120%"><feGaussianBlur stdDeviation="0.9"/></filter></defs><g clip-path="url(#avc)"><rect width="40" height="40" fill="#07070a"/><g filter="url(#avb)"><rect x="0" y="4" width="40" height="29" fill="#15171f"/><rect x="4" y="5" width="30" height="1.600" fill="#6f6657"/><rect x="0" y="15" width="9" height="5" fill="#5c5246"/><path d="M22 17 L40 15 L40 33 L30 33 Z" fill="#6b5a49"/><path d="M26 22 L40 20 L40 30 L31 31 Z" fill="#7d6b58"/><ellipse cx="16.500" cy="15" rx="8" ry="10" fill="#15131a"/><path d="M0 40 L2 24 L12 22 L24 27 L32 40 Z" fill="#12141b"/><ellipse cx="17.800" cy="18" rx="4.800" ry="7.800" fill="#a5826f"/><ellipse cx="15.500" cy="18" rx="2" ry="6" fill="#6e5447"/><ellipse cx="19.500" cy="16.500" rx="2" ry="3" fill="#c4a08c"/><rect x="15.500" y="23.500" width="5" height="2" fill="#5b4238"/><rect x="16" y="33.300" width="8.500" height="1.400" fill="#d8d8d8"/></g></g></svg>
<div class="abs" style="left:1592px;top:19px;font-size:14px;line-height:22px;color:#606266">cfzh</div>
<svg class="abs" style="left:1620px;top:24px;width:12px;height:12px" viewBox="0 0 12 12" fill="none" stroke="#606266" stroke-width="1.2"><path d="M1.5 4 L6 8.5 L10.5 4"/></svg>
</div><div id="hline"></div>
<div id="tabs">
<svg class="abs" style="left:458px;top:11px;width:140px;height:38px" viewBox="0 0 140 38"><path d="M5.500 38 C9.500 38 12 35.500 12 31 L12 5 C12 2 14 0 17 0 L123 0 C126 0 128 2 128 5 L128 31 C128 35.500 130.500 38 134.500 38 Z" fill="#e8f4ff"/></svg>
<div class="tab" style="left:50px;"><svg viewBox="0 0 24 24" fill="currentColor"><path d="M7.39 16.539a8 8 0 1 1 9.221 0l2.083 4.76a.5.5 0 0 1-.459.701H5.765a.5.5 0 0 1-.459-.7l2.083-4.761zm6.735-.693l1.332-.941a6 6 0 1 0-6.913 0l1.331.941L8.058 20h7.884l-1.817-4.154zM8.119 10.97l1.94-.485a2 2 0 0 0 3.882 0l1.94.485a4.002 4.002 0 0 1-7.762 0z"/></svg><span>人员</span></div>
<div class="tab" style="left:129px;"><svg viewBox="0 0 24 24" fill="currentColor"><path d="M19 20H5v1a1 1 0 0 1-1 1H3a1 1 0 0 1-1-1V11l2.480-5.788A2 2 0 0 1 6.320 4H17.680a2 2 0 0 1 1.838 1.212L22 11v10a1 1 0 0 1-1 1h-1a1 1 0 0 1-1-1v-1zm1-7H4v5h16v-5zM4.176 11h15.648l-2.143-5H6.320l-2.143 5zM6.500 17a1.500 1.500 0 1 1 0-3 1.500 1.500 0 0 1 0 3zm11 0a1.500 1.500 0 1 1 0-3 1.500 1.500 0 0 1 0 3z"/></svg><span>停车记录</span></div>
<div class="tab" style="left:251px;"><svg viewBox="0 0 24 24" fill="currentColor"><path d="M19 20H5v1a1 1 0 0 1-1 1H3a1 1 0 0 1-1-1V11l2.480-5.788A2 2 0 0 1 6.320 4H17.680a2 2 0 0 1 1.838 1.212L22 11v10a1 1 0 0 1-1 1h-1a1 1 0 0 1-1-1v-1zm1-7H4v5h16v-5zM4.176 11h15.648l-2.143-5H6.320l-2.143 5zM6.500 17a1.500 1.500 0 1 1 0-3 1.500 1.500 0 0 1 0 3zm11 0a1.500 1.500 0 1 1 0-3 1.500 1.500 0 0 1 0 3z"/></svg><span>车辆类型</span></div>
<div class="tab" style="left:373px;"><svg viewBox="0 0 24 24" fill="currentColor"><path d="M19 20H5v1a1 1 0 0 1-1 1H3a1 1 0 0 1-1-1V11l2.480-5.788A2 2 0 0 1 6.320 4H17.680a2 2 0 0 1 1.838 1.212L22 11v10a1 1 0 0 1-1 1h-1a1 1 0 0 1-1-1v-1zm1-7H4v5h16v-5zM4.176 11h15.648l-2.143-5H6.320l-2.143 5zM6.500 17a1.500 1.500 0 1 1 0-3 1.500 1.500 0 0 1 0 3zm11 0a1.500 1.500 0 1 1 0-3 1.500 1.500 0 0 1 0 3z"/></svg><span>车类定制</span></div>
<div class="tab" style="left:495px;color:#1890ff"><svg viewBox="0 0 24 24" fill="none" stroke="currentColor" stroke-width="2.100"><rect x="3" y="4" width="7" height="6.500"/><rect x="3" y="14.500" width="7" height="5.500"/><rect x="14" y="4" width="7" height="4"/><rect x="14" y="12" width="7" height="8"/></svg><span>列表</span></div>
<div class="tab" style="left:603px;"><svg viewBox="0 0 24 24" fill="none" stroke="currentColor" stroke-width="2.100"><rect x="3" y="4" width="7" height="6.500"/><rect x="3" y="14.500" width="7" height="5.500"/><rect x="14" y="4" width="7" height="4"/><rect x="14" y="12" width="7" height="8"/></svg><span>列表</span></div>
<svg class="abs" style="left:550px;top:25px;width:12px;height:12px" viewBox="0 0 12 12" stroke="#1890ff" stroke-width="1.2"><path d="M2.5 2.5l7 7M9.500 2.500l-7 7"/></svg>
<svg class="abs" style="left:1617px;top:18px;width:14px;height:14px" viewBox="0 0 14 14" fill="#999"><rect x="0" y="0" width="6" height="6"/><rect x="8" y="0" width="6" height="6"/><rect x="0" y="8" width="6" height="6"/><rect x="8" y="8" width="6" height="6"/></svg>
</div>
</body>
</html>
